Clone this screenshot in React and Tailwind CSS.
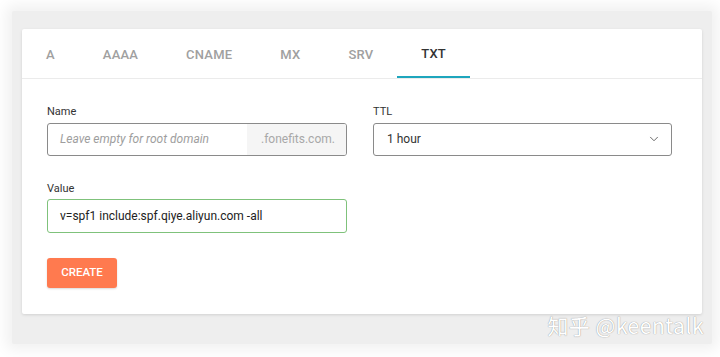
import { ChevronDown } from 'lucide-react';

export default function App() {
  const tabs = ['A', 'AAAA', 'CNAME', 'MX', 'SRV', 'TXT'];
  const active = 'TXT';

  return (
    <div className="w-[720px] h-[357px] bg-white pt-[11px] pl-[12px] pr-[8px] overflow-hidden" style={{ fontFamily: 'Roboto, "Noto Sans CJK SC", sans-serif' }}>
      {/* gray backdrop */}
      <div className="relative bg-[#eeeeee] pt-[18px] px-[10px] pb-[30px] shadow-[0_0_14px_6px_rgba(0,0,0,0.06)] rounded-[2px]">
        <div className="bg-white shadow-[0_1px_3px_rgba(0,0,0,0.12)] rounded-[2px]">
          {/* tabs */}
          <div className="flex h-[50px] border-b border-[#ebebeb]">
            {tabs.map((t) => (
              <div
                key={t}
                className={`px-6 flex items-center pt-[3px] text-[13px] font-medium tracking-[0.2px] ${t === active ? 'text-[#333333] border-b-2 border-[#1ea6bd]' : 'text-[#a0a0a0]'}`}
              >
                {t}
              </div>
            ))}
          </div>

          {/* form */}
          <div className="pl-[25px] pr-[30px] pt-[25px] pb-[26px]">
            <div className="grid grid-cols-[300px_299px] gap-x-[26px]">
              <div>
                <div className="text-[11px] text-[#333] mb-[2px]">Name</div>
                <div className="flex h-[33px] border border-[#8a8a8a] rounded-[3px] overflow-hidden">
                  <div className="flex-1 flex items-center pl-[12px] text-[12px] italic text-[#9e9e9e]">Leave empty for root domain</div>
                  <div className="w-[99px] bg-[#f5f5f5] flex items-center pl-[14px] text-[12px] text-[#a8a8a8]">.fonefits.com.</div>
                </div>
              </div>
              <div>
                <div className="text-[11px] text-[#333] mb-[2px]">TTL</div>
                <div className="flex items-center justify-between h-[33px] border border-[#8a8a8a] rounded-[3px] pl-[13px] pr-[10px] text-[12px] text-[#333]">
                  <span>1 hour</span>
                  <ChevronDown size={14} strokeWidth={1.5} className="text-[#555]" />
                </div>
              </div>
            </div>

            <div className="mt-[25px] w-[300px]">
              <div className="text-[11px] text-[#333] mb-[2px]">Value</div>
              <div className="flex items-center h-[34px] border border-[#7fc27b] rounded-[3px] pl-[12px] text-[12px] text-[#222]">
                v=spf1 include:spf.qiye.aliyun.com -all
              </div>
            </div>

            <button className="mt-[25px] w-[70px] h-[30px] bg-[#ff7a4f] rounded-[3px] text-white text-[11.5px] font-medium shadow-[0_1px_2px_rgba(0,0,0,0.15)]">
              CREATE
            </button>
          </div>
        </div>

        {/* watermark */}
        <div className="absolute right-[8px] bottom-[3px] text-[21px] text-white tracking-[0.5px] [text-shadow:0_0_1px_rgba(0,0,0,0.5)]" style={{ fontFamily: '"Noto Sans CJK SC", sans-serif' }}>
          知乎 @keentalk
        </div>
      </div>
    </div>
  );
}
